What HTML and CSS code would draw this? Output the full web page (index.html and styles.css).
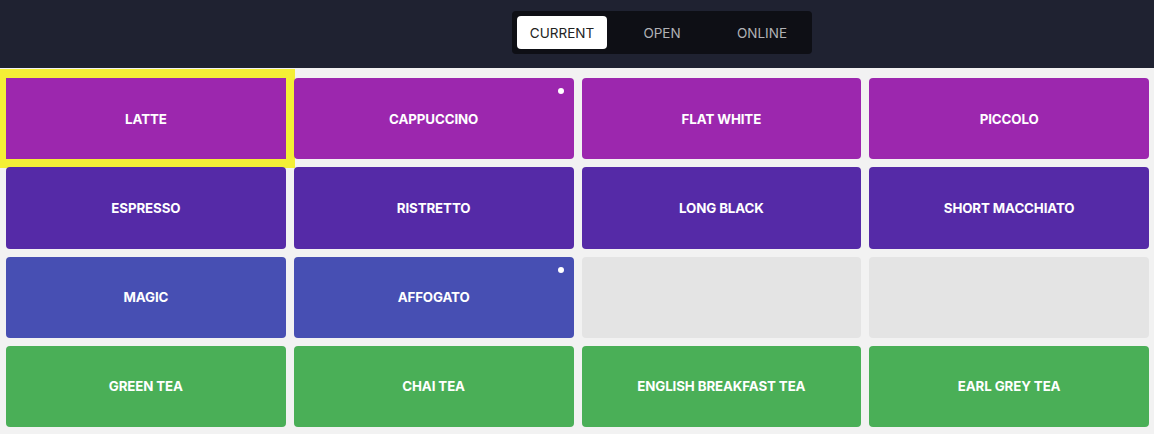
FILE: index.html
```html
<!DOCTYPE html>
<html>
<head>
    <title>Orders - Drinks</title>
    <link rel="stylesheet" href="styles.css">
</head>
<body>
    <div class="top-bar">
        <div class="tabs">
            <button class="tab active">CURRENT</button>
            <button class="tab">OPEN</button>
            <button class="tab">ONLINE</button>
        </div>
    </div>

    <div class="drink-grid">
        <div class="drink coffee selected">LATTE</div>
        <div class="drink coffee">CAPPUCCINO<span class="dot"></span></div>
        <div class="drink coffee">FLAT WHITE</div>
        <div class="drink coffee">PICCOLO</div>

        <div class="drink short">ESPRESSO</div>
        <div class="drink short">RISTRETTO</div>
        <div class="drink short">LONG BLACK</div>
        <div class="drink short">SHORT MACCHIATO</div>

        <div class="drink special">MAGIC</div>
        <div class="drink special">AFFOGATO<span class="dot"></span></div>
        <div class="drink empty"></div>
        <div class="drink empty"></div>

        <div class="drink tea">GREEN TEA</div>
        <div class="drink tea">CHAI TEA</div>
        <div class="drink tea">ENGLISH BREAKFAST TEA</div>
        <div class="drink tea">EARL GREY TEA</div>
    </div>
</body>
</html>
```

FILE: styles.css
```css
html, body {
    height: 100%;
}

body {
    margin: 0;
    font-family: Inter, "Noto Sans", sans-serif;
    background-color: #f2f2f2;
    display: flex;
    flex-direction: column;
}

.top-bar {
    height: 68px;
    box-sizing: border-box;
    background-color: #1f2231;
    padding: 11px 0 0 512px;
    flex-shrink: 0;
    position: relative;
    z-index: 1;
}

.tabs {
    display: inline-flex;
    gap: 10px;
    padding: 5px;
    background-color: #0e0f15;
    border-radius: 4px;
}

.tab {
    width: 90px;
    height: 33px;
    border: none;
    border-radius: 4px;
    background: transparent;
    color: #b0b1b5;
    font-family: inherit;
    font-size: 13.5px;
    cursor: pointer;
}

.tab.active {
    background-color: #fff;
    color: #222;
}

.drink-grid {
    flex: 1;
    display: grid;
    grid-template-columns: repeat(4, 1fr);
    grid-template-rows: repeat(4, 1fr);
    gap: 8px;
    padding: 10px 5px 7px 6px;
    min-height: 0;
}

.drink {
    position: relative;
    display: flex;
    align-items: center;
    justify-content: center;
    border-radius: 4px;
    color: #fff;
    font-size: 13.3px;
    font-weight: 700;
    letter-spacing: -0.1px;
}

.drink.selected {
    border-radius: 0;
    outline: 9px solid #f4ef36;
}

.coffee {
    background-color: #9c27ae;
}

.short {
    background-color: #552aa7;
}

.special {
    background-color: #474fb3;
}

.tea {
    background-color: #4aaf57;
}

.empty {
    background-color: #e4e4e4;
}

.dot {
    position: absolute;
    top: 10px;
    right: 10px;
    width: 6px;
    height: 6px;
    border-radius: 50%;
    background-color: #fff;
}
```
